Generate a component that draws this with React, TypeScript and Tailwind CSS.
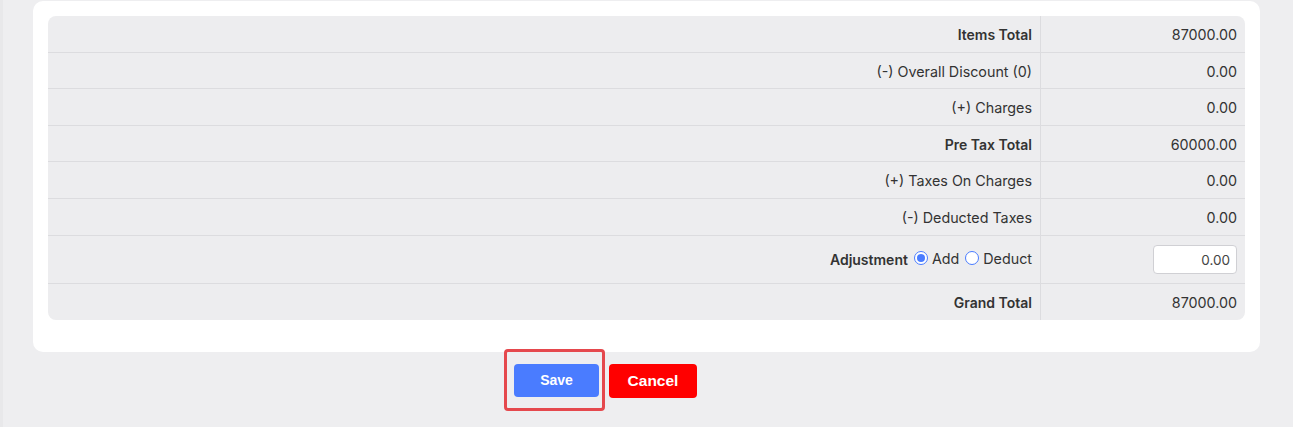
import React, { useState } from "react";

type Row = { label: string; value: string; bold?: boolean };

const rows: Row[] = [
  { label: "Items Total", value: "87000.00", bold: true },
  { label: "(-) Overall Discount (0)", value: "0.00" },
  { label: "(+) Charges", value: "0.00" },
  { label: "Pre Tax Total", value: "60000.00", bold: true },
  { label: "(+) Taxes On Charges", value: "0.00" },
  { label: "(-) Deducted Taxes", value: "0.00" },
];

const Radio: React.FC<{ checked: boolean; onClick: () => void }> = ({ checked, onClick }) => (
  <span
    onClick={onClick}
    className="mb-[3px] inline-flex h-[14px] w-[14px] cursor-pointer items-center justify-center rounded-full border border-[#4a7cff] bg-white"
  >
    {checked && <span className="h-[8px] w-[8px] rounded-full bg-[#4a7cff]" />}
  </span>
);

const App: React.FC = () => {
  const [mode, setMode] = useState<"add" | "deduct">("add");

  return (
    <div className="min-h-[427px] border-l-[3px] border-[#e8e8ea] bg-[#eeeef0] pl-[30px] pr-[33px] pt-px font-['Inter',sans-serif] text-[14.3px] text-[#333]">
      {/* summary card */}
      <div className="rounded-[10px] bg-white p-[15px] pb-[32px]">
        <div className="overflow-hidden rounded-[8px] bg-[#ededef]">
          {rows.map((r) => (
            <div key={r.label} className="flex h-[36.6px] border-b border-[#dcdcdf]">
              <div className={`flex flex-1 items-center justify-end border-r border-[#dcdcdf] pr-[8px] pt-[2px] ${r.bold ? "text-[14px] font-semibold" : ""}`}>
                {r.label}
              </div>
              <div className="flex w-[204px] items-center justify-end pr-[8px] pt-[2px]">{r.value}</div>
            </div>
          ))}

          <div className="flex h-[48px] border-b border-[#dcdcdf]">
            <div className="flex flex-1 items-center justify-end gap-[4px] border-r border-[#dcdcdf] pr-[8px]">
              <span className="mr-[2px] text-[14px] font-semibold">Adjustment</span>
              <Radio checked={mode === "add"} onClick={() => setMode("add")} />
              <span className="mr-[2px]">Add</span>
              <Radio checked={mode === "deduct"} onClick={() => setMode("deduct")} />
              <span>Deduct</span>
            </div>
            <div className="flex w-[204px] items-center justify-end pr-[8px]">
              <input
                defaultValue="0.00"
                className="h-[29px] w-[84px] rounded-[4px] border border-[#d0d0d4] bg-white px-[6px] pt-[2px] text-right text-[13.5px] text-[#444] outline-none"
              />
            </div>
          </div>

          <div className="flex h-[36px]">
            <div className="flex flex-1 items-center justify-end border-r border-[#dcdcdf] pr-[8px] pt-[2px] text-[14px] font-semibold">
              Grand Total
            </div>
            <div className="flex w-[204px] items-center justify-end pr-[8px] pt-[2px]">87000.00</div>
          </div>
        </div>
      </div>

      {/* actions */}
      <div className="flex items-center gap-[10px] pl-[481px] pt-[12px] font-['Liberation_Sans',Arial,sans-serif] font-bold text-white">
        <div className="relative">
          <button className="h-[33px] w-[85px] rounded-[4px] bg-[#4a7cff] text-[14px]">Save</button>
          {/* highlight marker */}
          <div className="pointer-events-none absolute left-[-10px] top-[-15px] h-[62px] w-[101px] rounded-[4px] border-[3px] border-[#e5484d]" />
        </div>
        <button className="h-[34px] w-[88px] rounded-[4px] bg-[#ff0000] text-[15.5px]">Cancel</button>
      </div>
    </div>
  );
};

export default App;
